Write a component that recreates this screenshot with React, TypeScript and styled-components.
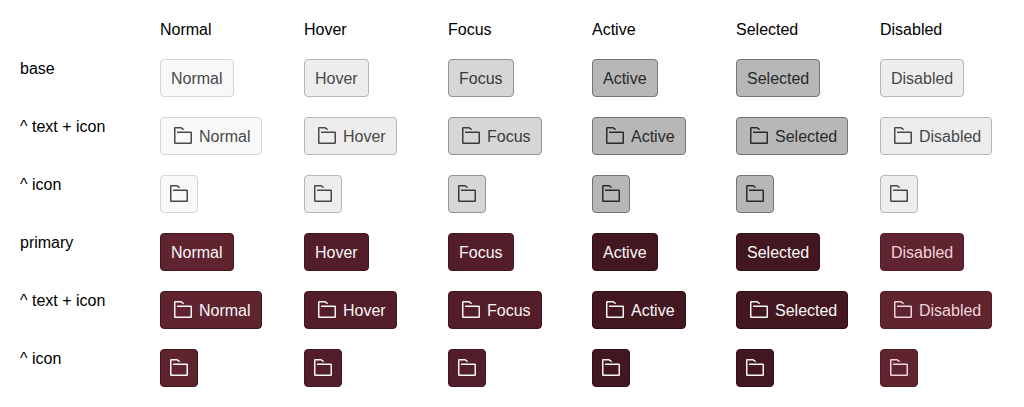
import React from 'react';
import styled, { createGlobalStyle } from 'styled-components';

const GlobalStyle = createGlobalStyle`
  *, *::before, *::after { box-sizing: border-box; }
  body {
    margin: 0;
    background: #fff;
    color: #000;
    font: 16px/19px "Liberation Sans", Arial, sans-serif;
  }
`;

type Tone = { bg: string; border: string; text: string };
type Variant = 'base' | 'primary';

const states = ['Normal', 'Hover', 'Focus', 'Active', 'Selected', 'Disabled'] as const;
type State = (typeof states)[number];

const tones: Record<Variant, Record<State, Tone>> = {
  base: {
    Normal: { bg: '#f8f8f8', border: '#d5d5d5', text: '#484848' },
    Hover: { bg: '#ededed', border: '#b6b6b6', text: '#484848' },
    Focus: { bg: '#d6d6d6', border: '#929292', text: '#3a3a3a' },
    Active: { bg: '#b7b7b7', border: '#757575', text: '#2a2a2a' },
    Selected: { bg: '#b7b7b7', border: '#757575', text: '#2a2a2a' },
    Disabled: { bg: '#ededed', border: '#b6b6b6', text: '#484848' },
  },
  primary: {
    Normal: { bg: '#602330', border: '#431720', text: '#f7f7f7' },
    Hover: { bg: '#541d2a', border: '#431720', text: '#f7f7f7' },
    Focus: { bg: '#541d2a', border: '#431720', text: '#f7f7f7' },
    Active: { bg: '#431720', border: '#330f18', text: '#f7f7f7' },
    Selected: { bg: '#431720', border: '#330f18', text: '#f7f7f7' },
    Disabled: { bg: '#602330', border: '#541d2a', text: '#efd3d8' },
  },
};

const Sheet = styled.main`
  display: grid;
  width: 1024px;
  padding: 20px;
  grid-template-columns: 120px repeat(6, 124px);
  grid-template-rows: 19px;
  grid-auto-rows: 38px;
  gap: 20px;
`;

const Label = styled.div`
  white-space: nowrap;
`;

const Button = styled.button<{ $tone: Tone; $iconOnly: boolean }>`
  display: inline-flex;
  align-items: center;
  justify-self: start;
  gap: 4px;
  height: 38px;
  padding: 0 ${(p) => (p.$iconOnly ? 6 : 10)}px;
  border: 1px solid ${(p) => p.$tone.border};
  border-radius: 4px;
  background: ${(p) => p.$tone.bg};
  color: ${(p) => p.$tone.text};
  font: inherit;
  white-space: nowrap;
`;

const Icon = styled.svg`
  display: block;
  flex: none;
  width: 24px;
  height: 24px;
  fill: none;
  stroke: currentColor;
  stroke-width: 1.5;
  stroke-linejoin: round;
  stroke-linecap: butt;
`;

const FolderIcon = () => (
  <Icon viewBox="0 0 24 24" aria-hidden="true">
    <path d="M12.6 5.7 10.1 3.75H4.25a.5.5 0 0 0-.5.5v14.5a.5.5 0 0 0 .5.5h15.5a.5.5 0 0 0 .5-.5V8.75a.5.5 0 0 0-.5-.5H6" />
  </Icon>
);

const rows: { label: string; variant: Variant; icon: boolean; text: boolean }[] = [
  { label: 'base', variant: 'base', icon: false, text: true },
  { label: '^ text + icon', variant: 'base', icon: true, text: true },
  { label: '^ icon', variant: 'base', icon: true, text: false },
  { label: 'primary', variant: 'primary', icon: false, text: true },
  { label: '^ text + icon', variant: 'primary', icon: true, text: true },
  { label: '^ icon', variant: 'primary', icon: true, text: false },
];

export default function App() {
  return (
    <>
      <GlobalStyle />
      <Sheet>
        <Label />
        {states.map((state) => (
          <Label key={state}>{state}</Label>
        ))}
        {rows.map((row, i) => (
          <React.Fragment key={i}>
            <Label>{row.label}</Label>
            {states.map((state) => (
              <Button
                key={state}
                type="button"
                aria-label={state}
                $tone={tones[row.variant][state]}
                $iconOnly={!row.text}
              >
                {row.icon && <FolderIcon />}
                {row.text && <span>{state}</span>}
              </Button>
            ))}
          </React.Fragment>
        ))}
      </Sheet>
    </>
  );
}
